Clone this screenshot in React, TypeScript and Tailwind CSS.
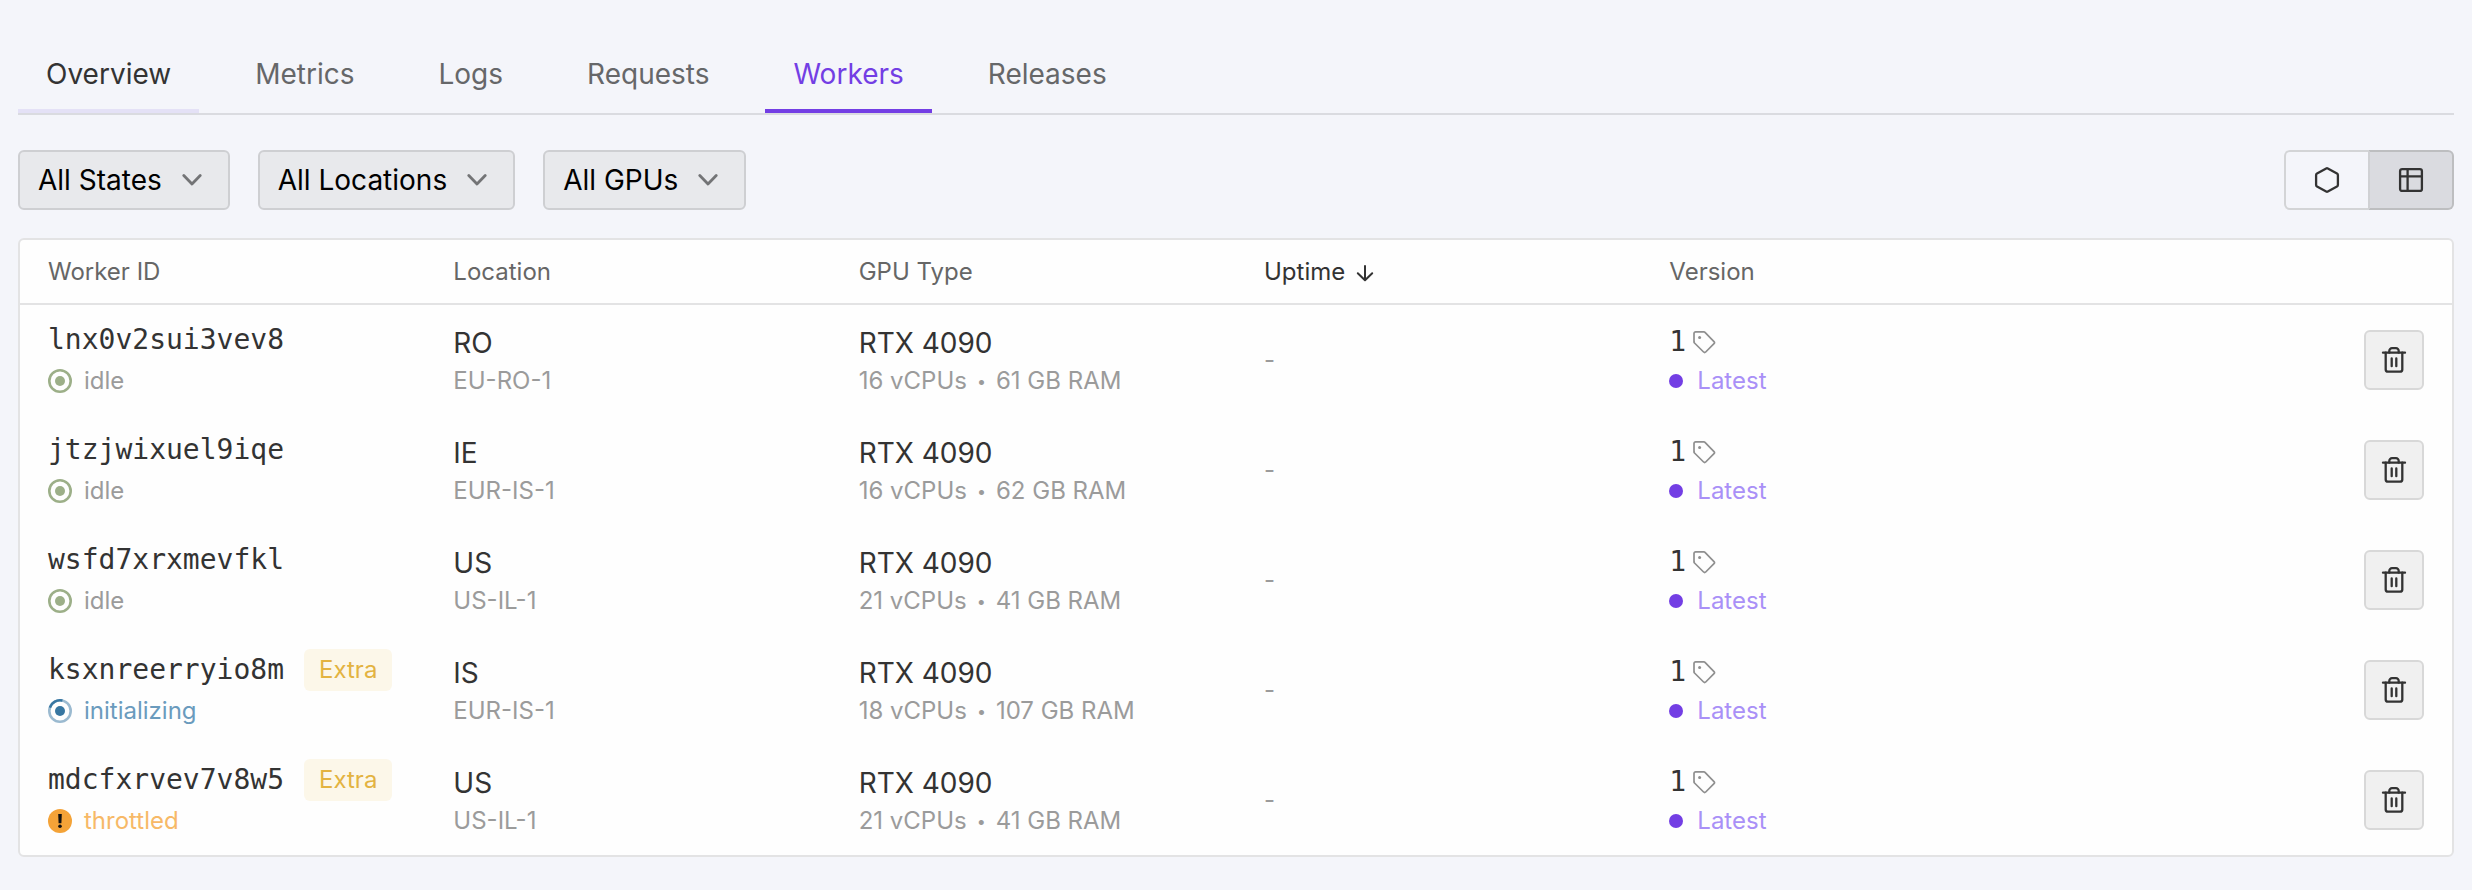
import React from "react";

const sans = "font-['Inter','Liberation_Sans',sans-serif]";
const mono = "font-['DejaVu_Sans_Mono','Liberation_Mono',monospace]";

type Status = "idle" | "initializing" | "throttled";

interface Worker {
  id: string;
  extra?: boolean;
  status: Status;
  country: string;
  region: string;
  cpus: number;
  ram: number;
}

const tabs = ["Overview", "Metrics", "Logs", "Requests", "Workers", "Releases"];

const filters = [
  { label: "State", options: ["All States", "Idle"] },
  { label: "Location", options: ["All Locations", "EU-RO-1"] },
  { label: "GPU", options: ["All GPUs", "RTX 4090"] },
];

const workers: Worker[] = [
  { id: "lnx0v2sui3vev8", status: "idle", country: "RO", region: "EU-RO-1", cpus: 16, ram: 61 },
  { id: "jtzjwixuel9iqe", status: "idle", country: "IE", region: "EUR-IS-1", cpus: 16, ram: 62 },
  { id: "wsfd7xrxmevfkl", status: "idle", country: "US", region: "US-IL-1", cpus: 21, ram: 41 },
  { id: "ksxnreerryio8m", extra: true, status: "initializing", country: "IS", region: "EUR-IS-1", cpus: 18, ram: 107 },
  { id: "mdcfxrvev7v8w5", extra: true, status: "throttled", country: "US", region: "US-IL-1", cpus: 21, ram: 41 },
];

const statusColor: Record<Status, string> = {
  idle: "text-[#9b9b9b]",
  initializing: "text-[#6a9bbd]",
  throttled: "text-[#f7b967]",
};

function StatusIcon({ status }: { status: Status }) {
  if (status === "throttled") {
    return (
      <svg className="size-6" viewBox="0 0 24 24" aria-hidden="true">
        <circle cx="12" cy="12" r="12" fill="#f4a338" />
        <path d="M10.2 5h3.6l-.4 9.2h-2.8z" fill="#111" />
        <circle cx="12" cy="17.2" r="1.8" fill="#111" />
      </svg>
    );
  }
  if (status === "initializing") {
    return (
      <svg className="size-6" viewBox="0 0 24 24" fill="none" aria-hidden="true">
        <circle cx="12" cy="12" r="10.7" stroke="#9bbad0" strokeWidth="2.6" />
        <path d="M1.9 8.6A10.7 10.7 0 0 1 14.4 1.6" stroke="#3776a1" strokeWidth="2.6" />
        <circle cx="12" cy="12" r="5" fill="#3776a1" />
      </svg>
    );
  }
  return (
    <svg className="size-6" viewBox="0 0 24 24" fill="none" aria-hidden="true">
      <circle cx="12" cy="12" r="10.7" stroke="#9caf88" strokeWidth="2.6" />
      <circle cx="12" cy="12" r="5" fill="#9caf88" />
    </svg>
  );
}

function Chevron() {
  return (
    <svg
      className="pointer-events-none absolute top-1/2 right-7 h-3 w-5 -translate-y-1/2"
      viewBox="0 0 20 12"
      fill="none"
      stroke="#737476"
      strokeWidth="2.8"
      strokeLinecap="round"
      strokeLinejoin="round"
      aria-hidden="true"
    >
      <path d="M1.8 1.6 10 10l8.2-8.400" />
    </svg>
  );
}

function HexagonIcon() {
  return (
    <svg className="size-7" viewBox="0 0 28 28" fill="none" stroke="#333" strokeWidth="2.3" strokeLinejoin="round" aria-hidden="true">
      <path d="M13.200 2.400a1.700 1.700 0 0 1 1.600 0l9.200 5.100a1.700 1.700 0 0 1 .9 1.500v10a1.700 1.700 0 0 1-.9 1.500l-9.200 5.100a1.700 1.700 0 0 1-1.600 0L4 20.500a1.700 1.700 0 0 1-.9-1.500V9A1.700 1.700 0 0 1 4 7.500z" />
    </svg>
  );
}

function TableIcon() {
  return (
    <svg className="size-7" viewBox="0 0 28 28" fill="none" stroke="#333" strokeWidth="2.3" strokeLinejoin="round" aria-hidden="true">
      <rect x="3.1" y="3.1" width="21.8" height="21.8" rx="2" />
      <path d="M3.1 10.400h21.800M10.600 3.100v21.800" />
    </svg>
  );
}

function TrashIcon() {
  return (
    <svg className="size-7" viewBox="0 0 28 28" fill="none" stroke="#333" strokeWidth="2.3" strokeLinecap="round" strokeLinejoin="round" aria-hidden="true">
      <path d="M3 6.700h22" />
      <path d="M5.700 6.700v16.700a2.300 2.300 0 0 0 2.300 2.300h12a2.300 2.300 0 0 0 2.300-2.300V6.700" />
      <path d="M9.300 6.700V4.900a2.700 2.700 0 0 1 2.700-2.700h4a2.700 2.700 0 0 1 2.700 2.700v1.800" />
      <path d="M11.700 12.400v7.800M16.300 12.400v7.800" />
    </svg>
  );
}

function TagIcon() {
  return (
    <svg className="size-6" viewBox="0 0 24 24" fill="none" stroke="#8f8f8f" strokeWidth="1.7" strokeLinejoin="round" aria-hidden="true">
      <path d="M2 3.500A1.600 1.600 0 0 1 3.600 1.900h8.300a1.600 1.600 0 0 1 1.100.5l9 9.200a1.500 1.500 0 0 1 0 2.100l-8.300 8.300a1.500 1.500 0 0 1-2.100 0L2.500 13a1.600 1.600 0 0 1-.5-1.100z" />
      <circle cx="7.600" cy="7.400" r="1.500" fill="#8f8f8f" stroke="none" />
    </svg>
  );
}

function SortArrow() {
  return (
    <svg className="size-5" viewBox="0 0 20 20" fill="none" stroke="#333" strokeWidth="2" strokeLinecap="round" strokeLinejoin="round" aria-hidden="true">
      <path d="M10 4v14M2.800 11.200 10 18.200l7.200-7" />
    </svg>
  );
}

function tabStyle(tab: string) {
  if (tab === "Workers") return "border-[#733ee4] text-[#733ee4]";
  if (tab === "Overview") return "border-[#e4e1f6] text-[#333]";
  return "border-transparent text-[#666769]";
}

export default function App() {
  return (
    <main className={`min-h-screen bg-[#f4f5fa] px-[18px] pt-9 pb-8 text-[#333] ${sans}`}>
      <nav className="flex gap-7 border-b-2 border-[#dadbe0]" aria-label="Endpoint sections">
        {tabs.map((tab) => (
          <a
            key={tab}
            href={`#${tab.toLowerCase()}`}
            aria-current={tab === "Workers" ? "page" : undefined}
            className={`border-b-4 px-7 pt-[18px] pb-[15px] text-[28px] leading-10 ${tabStyle(tab)}`}
          >
            {tab}
          </a>
        ))}
      </nav>

      <div className="mt-[35px] flex items-center justify-between">
        <div className="flex gap-7">
          {filters.map((filter) => (
            <div key={filter.label} className="relative">
              <select
                aria-label={filter.label}
                className="field-sizing-content h-[60px] appearance-none rounded-md border-2 border-[#cecfd2] bg-[#e8e9ec] pr-[66px] pl-[18px] text-[28px] text-black"
              >
                {filter.options.map((option) => (
                  <option key={option}>{option}</option>
                ))}
              </select>
              <Chevron />
            </div>
          ))}
        </div>
        <div className="flex">
          <button
            type="button"
            aria-label="Hexagon view"
            className="flex h-[60px] w-[84px] items-center justify-center rounded-l-md border-2 border-r-0 border-[#d3d4d6]"
          >
            <HexagonIcon />
          </button>
          <button
            type="button"
            aria-label="Table view"
            aria-pressed="true"
            className="flex h-[60px] w-[86px] items-center justify-center rounded-r-md border-2 border-[#bdbec0] border-l-[#d0d1d4] bg-[#dadbe0]"
          >
            <TableIcon />
          </button>
        </div>
      </div>

      <div className="mt-7 overflow-hidden rounded-md border-2 border-[#e3e3e4] bg-[#fefefe]">
        <table className="w-full table-fixed border-separate border-spacing-0 text-left">
          <thead>
            <tr className="h-[65px] text-2xl text-[#666]">
              <th className="border-b-2 border-[#e3e3e4] px-7 font-normal">Worker ID</th>
              <th className="border-b-2 border-[#e3e3e4] px-7 font-normal">Location</th>
              <th className="border-b-2 border-[#e3e3e4] px-7 font-normal">GPU Type</th>
              <th className="border-b-2 border-[#e3e3e4] px-7 font-normal" aria-sort="descending">
                <button type="button" className="flex items-center gap-2.5 text-[#333]">
                  Uptime
                  <SortArrow />
                </button>
              </th>
              <th className="border-b-2 border-[#e3e3e4] px-7 font-normal">Version</th>
              <td className="border-b-2 border-[#e3e3e4] px-7" />
            </tr>
          </thead>
          <tbody>
            {workers.map((worker) => (
              <tr key={worker.id} className="h-[110px]">
                <td className="px-7">
                  <div className="flex h-[42px] items-center gap-5">
                    <span className={`text-[28px] ${mono}`}>{worker.id}</span>
                    {worker.extra && (
                      <span className="rounded-md bg-[#fcf7e9] px-[15px] py-[5px] text-2xl leading-8 text-[#e3b341]">
                        Extra
                      </span>
                    )}
                  </div>
                  <div className={`flex h-10 items-center gap-3 text-2xl ${statusColor[worker.status]}`}>
                    <StatusIcon status={worker.status} />
                    {worker.status}
                  </div>
                </td>
                <td className="px-7">
                  <div className="text-[28px] leading-[42px]">{worker.country}</div>
                  <div className="text-2xl leading-[34px] text-[#9b9b9b]">{worker.region}</div>
                </td>
                <td className="px-7">
                  <div className="text-[28px] leading-[42px]">RTX 4090</div>
                  <div className="flex items-center gap-2.5 text-2xl leading-[34px] text-[#9b9b9b]">
                    <span>{worker.cpus} vCPUs</span>
                    <span className="text-base">•</span>
                    <span>{worker.ram} GB RAM</span>
                  </div>
                </td>
                <td className="px-7 text-2xl text-[#9b9b9b]">-</td>
                <td className="px-7">
                  <div className="flex h-[42px] items-center gap-1.5">
                    <span className={`text-[28px] ${mono}`}>1</span>
                    <TagIcon />
                  </div>
                  <div className="flex h-9 items-center gap-[14px] text-2xl text-[#a990f7]">
                    <span className="size-[14px] rounded-full bg-[#733ee4]" />
                    Latest
                  </div>
                </td>
                <td className="px-7">
                  <button
                    type="button"
                    aria-label={`Delete worker ${worker.id}`}
                    className="ml-auto flex size-[60px] items-center justify-center rounded-md border-2 border-[#d8d8d8] bg-[#f0f0f0]"
                  >
                    <TrashIcon />
                  </button>
                </td>
              </tr>
            ))}
          </tbody>
        </table>
      </div>
    </main>
  );
}
